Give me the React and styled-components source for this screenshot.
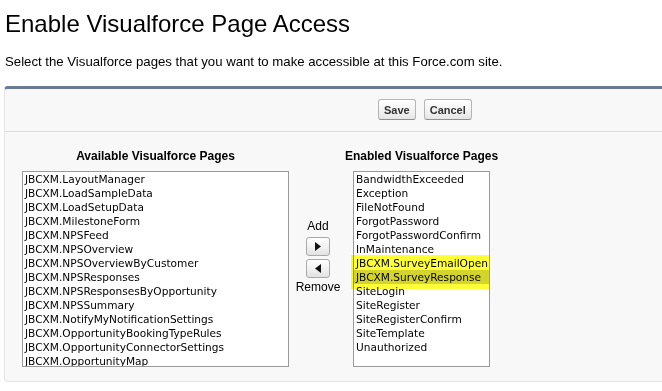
import React from "react";
import styled, { createGlobalStyle } from "styled-components";

const GlobalStyle = createGlobalStyle`
  body {
    margin: 0;
    background: #ffffff;
    font-family: Arial, "Liberation Sans", Helvetica, sans-serif;
    color: #000;
  }
`;

const Page = styled.div`
  width: 662px;
  height: 391px;
  overflow: hidden;
`;

const Title = styled.h1`
  margin: 0;
  padding: 10px 0 0 5px;
  font-size: 24px;
  line-height: 28px;
  font-weight: normal;
`;

const Intro = styled.p`
  margin: 16px 0 0 5px;
  font-size: 13.2px;
  line-height: 16px;
`;

const Panel = styled.div`
  margin: 16px 0 0 4px;
  background: #f8f8f8;
  border-top: 3px solid #6c7a93;
  border-left: 1px solid #e6e6e6;
  border-bottom: 1px solid #e3e3e3;
  border-radius: 4px 0 0 4px;
  padding-bottom: 14px;
`;

const ButtonBar = styled.div`
  display: flex;
  gap: 8px;
  padding: 10px 0 11px 373px;
  border-bottom: 1px solid #dcdcdc;
`;

const Button = styled.button`
  height: 21px;
  padding: 0 5px;
  font-family: Arial, "Liberation Sans", sans-serif;
  font-size: 11px;
  font-weight: bold;
  color: #333;
  background: linear-gradient(#ffffff, #f1f1f1 60%, #e6e6e6);
  border: 1px solid #b5b5b5;
  border-bottom-color: #8f8f8f;
  border-radius: 3px;
`;

const Columns = styled.div`
  display: grid;
  grid-template-columns: 267px 64px 137px;
  row-gap: 7px;
  padding: 17px 0 0 17px;
`;

const Heading = styled.div`
  font-size: 12px;
  line-height: 15px;
  font-weight: bold;
  text-align: center;
  white-space: nowrap;
  display: flex;
  justify-content: center;
`;

const ListWrap = styled.div`
  position: relative;
`;

const ListBox = styled.div`
  height: 194px;
  border: 1px solid #9a9a9a;
  background: #fff;
  overflow: hidden;
  font-family: "DejaVu Sans", Verdana, sans-serif;
  font-size: 10.6px;
  line-height: 14px;
`;

const Item = styled.div`
  padding-left: 2px;
  height: 14px;
  white-space: nowrap;
  background: ${(p) => (p.$selected ? "#d4d4d4" : "transparent")};
`;

const Marker = styled.div`
  position: absolute;
  left: -2px;
  top: 84px;
  width: 138px;
  height: 34px;
  background: rgba(255, 255, 0, 0.78);
  mix-blend-mode: multiply;
  pointer-events: none;
`;

const Mover = styled.div`
  display: flex;
  flex-direction: column;
  align-items: center;
  padding: 48px 6px 0 0;
  font-size: 12px;
  line-height: 14px;
`;

const ArrowButton = styled.button`
  width: 24px;
  height: 19px;
  margin-top: ${(p) => p.$gap}px;
  padding: 0;
  display: flex;
  align-items: center;
  justify-content: center;
  background: linear-gradient(#ffffff, #f0f0f0 55%, #e2e2e2);
  border: 1px solid #a9a9a9;
  border-radius: 3px;
`;

const Label = styled.div`
  margin-top: ${(p) => p.$gap || 0}px;
`;

const available = [
  "JBCXM.LayoutManager",
  "JBCXM.LoadSampleData",
  "JBCXM.LoadSetupData",
  "JBCXM.MilestoneForm",
  "JBCXM.NPSFeed",
  "JBCXM.NPSOverview",
  "JBCXM.NPSOverviewByCustomer",
  "JBCXM.NPSResponses",
  "JBCXM.NPSResponsesByOpportunity",
  "JBCXM.NPSSummary",
  "JBCXM.NotifyMyNotificationSettings",
  "JBCXM.OpportunityBookingTypeRules",
  "JBCXM.OpportunityConnectorSettings",
  "JBCXM.OpportunityMap",
];

const enabled = [
  "BandwidthExceeded",
  "Exception",
  "FileNotFound",
  "ForgotPassword",
  "ForgotPasswordConfirm",
  "InMaintenance",
  "JBCXM.SurveyEmailOpen",
  "JBCXM.SurveyResponse",
  "SiteLogin",
  "SiteRegister",
  "SiteRegisterConfirm",
  "SiteTemplate",
  "Unauthorized",
];

const Triangle = ({ left }) => (
  <svg width="6" height="9" viewBox="0 0 6 9">
    <polygon points={left ? "6,0 6,9 0,4.5" : "0,0 0,9 6,4.5"} fill="#111" />
  </svg>
);

export default function App() {
  return (
    <Page>
      <GlobalStyle />
      <Title>Enable Visualforce Page Access</Title>
      <Intro>
        Select the Visualforce pages that you want to make accessible at this Force.com site.
      </Intro>
      <Panel>
        <ButtonBar>
          <Button>Save</Button>
          <Button>Cancel</Button>
        </ButtonBar>
        <Columns>
          <Heading>Available Visualforce Pages</Heading>
          <div />
          <Heading>Enabled Visualforce Pages</Heading>

          <ListWrap>
            <ListBox>
              {available.map((name) => (
                <Item key={name}>{name}</Item>
              ))}
            </ListBox>
          </ListWrap>

          <Mover>
            <Label>Add</Label>
            <ArrowButton $gap={4}>
              <Triangle />
            </ArrowButton>
            <ArrowButton $gap={3}>
              <Triangle left />
            </ArrowButton>
            <Label $gap={2}>Remove</Label>
          </Mover>

          <ListWrap>
            <ListBox>
              {enabled.map((name) => (
                <Item key={name} $selected={name === "JBCXM.SurveyResponse"}>
                  {name}
                </Item>
              ))}
            </ListBox>
            <Marker />
          </ListWrap>
        </Columns>
      </Panel>
    </Page>
  );
}
